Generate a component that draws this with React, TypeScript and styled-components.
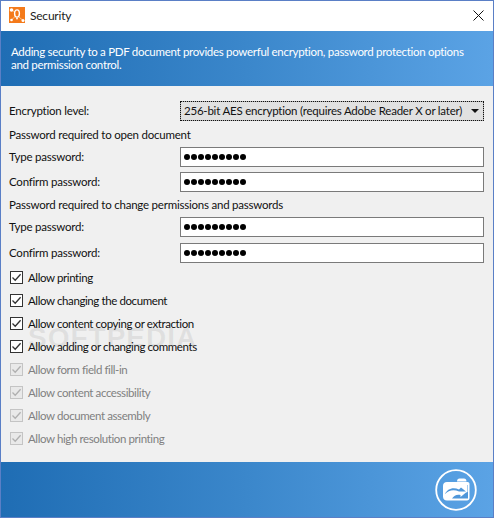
import React from 'react';
import styled, { createGlobalStyle } from 'styled-components';

const GlobalStyle = createGlobalStyle`
  html, body {
    margin: 0;
    padding: 0;
    background: #f0f0f0;
  }
  * {
    box-sizing: border-box;
  }
`;

const Window = styled.div`
  position: relative;
  width: 494px;
  height: 518px;
  border: 1px solid #5a7fc6;
  background: #f0f0f0;
  display: flex;
  flex-direction: column;
  font-family: Lato, Roboto, sans-serif;
  font-size: 11.5px;
  letter-spacing: -0.22px;
  color: #111;
  overflow: hidden;
`;

const TitleBar = styled.div`
  height: 30px;
  background: #fff;
  display: flex;
  align-items: center;
  padding: 0 9px 2px 8px;
  gap: 5px;
`;

const TitleText = styled.div`
  flex: 1;
  color: #222;
  font-size: 12px;
`;

const Banner = styled.div`
  height: 55px;
  flex: none;
  background: linear-gradient(90deg, #1f6db4 0%, #3b87cb 50%, #5ba3e5 100%);
  color: #fff;
  letter-spacing: -0.3px;
  line-height: 13px;
  padding: 14px 10px 0 10px;
  white-space: nowrap;
`;

const Form = styled.div`
  flex: 1;
  display: flex;
  flex-direction: column;
  padding: 15px 9px 0 8px;
`;

const FieldRow = styled.div<{ $mb?: number }>`
  display: grid;
  grid-template-columns: 171px 304px;
  align-items: center;
  height: 20px;
  margin-bottom: ${p => p.$mb ?? 6}px;
`;

const FieldLabel = styled.span`
  padding-bottom: 1px;
`;

const Heading = styled.div`
  height: 16px;
  line-height: 15px;
  margin-bottom: 4px;
`;

const SelectBox = styled.div`
  height: 20px;
  background: #e1e1e1;
  border: 1px solid #adadad;
  outline: 1px dotted #111;
  outline-offset: -1px;
  display: flex;
  align-items: center;
  justify-content: space-between;
  padding: 0 4px 1px 3px;
  color: #111;
  white-space: nowrap;
`;

const Arrow = styled.span`
  width: 0;
  height: 0;
  border-left: 4px solid transparent;
  border-right: 4px solid transparent;
  border-top: 4px solid #111;
`;

const PasswordBox = styled.div`
  height: 20px;
  background: #fff;
  border: 1px solid #7a7a7a;
  display: flex;
  align-items: center;
  padding-left: 3px;
  gap: 1px;
`;

const Dot = styled.span`
  width: 6px;
  height: 6px;
  border-radius: 50%;
  background: #000;
`;

const CheckList = styled.div`
  display: flex;
  flex-direction: column;
  gap: 7px;
  padding-left: 1px;
`;

const CheckRow = styled.div<{ $disabled?: boolean }>`
  height: 16px;
  display: flex;
  align-items: center;
  gap: 5px;
  letter-spacing: -0.4px;
  color: ${p => (p.$disabled ? '#808080' : '#111')};
`;

const CheckBox = styled.span<{ $disabled?: boolean }>`
  width: 13px;
  height: 13px;
  flex: none;
  background: ${p => (p.$disabled ? '#e9e9e9' : '#fff')};
  border: 1px solid ${p => (p.$disabled ? '#c4c4c4' : '#333')};
  display: flex;
  align-items: center;
  justify-content: center;
`;

const Footer = styled.div`
  height: 55px;
  flex: none;
  background: linear-gradient(90deg, #1f6db4 0%, #3b87cb 50%, #5ba3e5 100%);
  display: flex;
  align-items: center;
  justify-content: flex-end;
  padding-right: 16px;
`;

const Watermark = styled.div`
  position: absolute;
  left: 27px;
  top: 321px;
  font-family: 'Liberation Sans', sans-serif;
  font-size: 28px;
  font-weight: 700;
  letter-spacing: 1px;
  color: rgba(110, 110, 110, 0.12);
  pointer-events: none;
`;

const Logo = () => (
  <svg width="16" height="16" viewBox="0 0 16 16">
    <rect width="16" height="16" fill="#f47a1a" />
    <path d="M2.5 3L6 5M2.5 13L6 9.5M10 10L14 13.5" stroke="#ffd0a0" strokeWidth="0.8" fill="none" />
    <circle cx="2.5" cy="3" r="1.8" fill="#fff" />
    <ellipse cx="8" cy="6.5" rx="2.4" ry="3.6" fill="none" stroke="#fff" strokeWidth="1.4" />
    <circle cx="8" cy="11.5" r="0.9" fill="#fff" />
    <circle cx="2.5" cy="13" r="1.3" fill="#fff" />
    <circle cx="14" cy="13.5" r="1.5" fill="#fff" />
  </svg>
);

const CloseIcon = () => (
  <svg width="11" height="11" viewBox="0 0 11 11">
    <path d="M0.5 0.5L10.5 10.5M10.5 0.5L0.5 10.5" stroke="#111" strokeWidth="1" fill="none" />
  </svg>
);

const Check = ({ color }: { color: string }) => (
  <svg width="11" height="11" viewBox="0 0 11 11">
    <path d="M1.5 5.5L4.2 8.2L9.6 2.2" stroke={color} strokeWidth="1.3" fill="none" />
  </svg>
);

const FolderButton = () => (
  <svg width="42" height="42" viewBox="0 0 42 42">
    <circle cx="21" cy="21" r="19.8" fill="none" stroke="#fff" strokeWidth="1.8" />
    <path d="M22 12.5C22 10.5 23 9.5 24.5 9.5H29C30.5 9.5 31.5 10.5 31.5 12.5Z" fill="#fff" />
    <path
      d="M8 17C8 14.5 9.5 13 12 13H32.5C34 13 34.5 14 34.5 15V29C34.5 30.5 33.5 31.5 32 31.5H12C9.5 31.5 8 30 8 27.5Z"
      fill="#fff"
    />
    <path d="M10 25C12 20 18 17.5 24 20.5L26 18.5L31 22.5H24C19 20 13.5 21 10 25Z" fill="#4f97da" />
    <path d="M17 29.5C19 26.5 22 25 25.5 26V28L31 23.5L32.5 23V16H33V29.5Z" fill="#4f97da" />
  </svg>
);

const Password = () => (
  <PasswordBox>
    {Array.from({ length: 9 }).map((_, i) => (
      <Dot key={i} />
    ))}
  </PasswordBox>
);

const enabledOptions = [
  'Allow printing',
  'Allow changing the document',
  'Allow content copying or extraction',
  'Allow adding or changing comments',
];

const disabledOptions = [
  'Allow form field fill-in',
  'Allow content accessibility',
  'Allow document assembly',
  'Allow high resolution printing',
];

export default function App() {
  return (
    <>
      <GlobalStyle />
      <Window>
        <TitleBar>
          <Logo />
          <TitleText>Security</TitleText>
          <CloseIcon />
        </TitleBar>
        <Banner>
          Adding security to a PDF document provides powerful encryption, password protection options
          <br />
          and permission control.
        </Banner>
        <Form>
          <FieldRow>
            <FieldLabel>Encryption level:</FieldLabel>
            <SelectBox>
              256-bit AES encryption (requires Adobe Reader X or later)
              <Arrow />
            </SelectBox>
          </FieldRow>
          <Heading>Password required to open document</Heading>
          <FieldRow $mb={5}>
            <FieldLabel>Type password:</FieldLabel>
            <Password />
          </FieldRow>
          <FieldRow $mb={5}>
            <FieldLabel>Confirm password:</FieldLabel>
            <Password />
          </FieldRow>
          <Heading>Password required to change permissions and passwords</Heading>
          <FieldRow>
            <FieldLabel>Type password:</FieldLabel>
            <Password />
          </FieldRow>
          <FieldRow>
            <FieldLabel>Confirm password:</FieldLabel>
            <Password />
          </FieldRow>
          <CheckList>
            {enabledOptions.map(label => (
              <CheckRow key={label}>
                <CheckBox>
                  <Check color="#333" />
                </CheckBox>
                {label}
              </CheckRow>
            ))}
            {disabledOptions.map(label => (
              <CheckRow key={label} $disabled>
                <CheckBox $disabled>
                  <Check color="#b0b0b0" />
                </CheckBox>
                {label}
              </CheckRow>
            ))}
          </CheckList>
        </Form>
        <Footer>
          <FolderButton />
        </Footer>
        <Watermark>SOFTPEDIA</Watermark>
      </Window>
    </>
  );
}
